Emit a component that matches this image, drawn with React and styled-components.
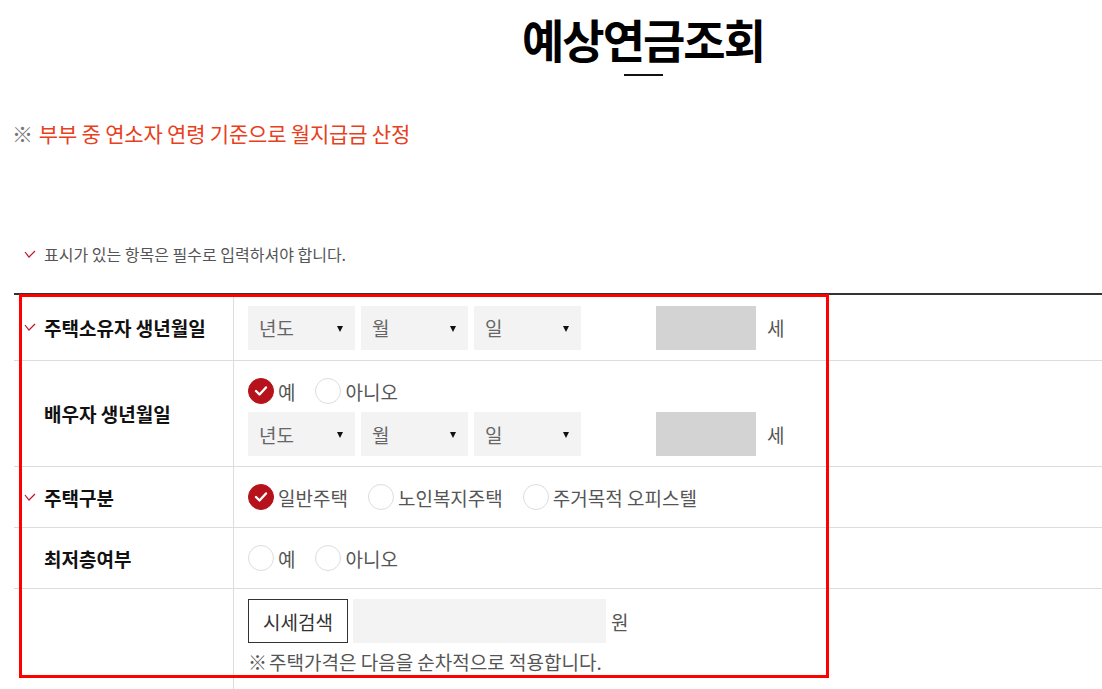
import styled, { createGlobalStyle } from 'styled-components';

const GlobalStyle = createGlobalStyle`
  body {
    margin: 0;
    overflow: hidden;
    background: #fff;
    font-family: "Noto Sans CJK KR", "Noto Sans", sans-serif;
    color: #555;
  }
`;

const Page = styled.div`
  padding-left: 14px;
`;

const Title = styled.h2`
  margin: 0;
  padding: 8px 0 0 170px;
  text-align: center;
  font-size: 46px;
  font-weight: 700;
  letter-spacing: -2px;
  line-height: 60px;
  color: #000;

  &::after {
    content: '';
    display: block;
    width: 39px;
    height: 2px;
    margin: 6px auto 0;
    background: #111;
  }
`;

const Notice = styled.p`
  margin: 42px 0 0 -2px;
  font-size: 21px;
  line-height: 30px;
  letter-spacing: -0.2px;
  color: #e8401c;

  span {
    color: #777;
    margin-right: 6px;
  }
`;

const RequiredNote = styled.p`
  display: flex;
  align-items: center;
  gap: 8px;
  margin: 95px 0 0 10px;
  font-size: 16px;
  line-height: 22px;
  color: #555;
`;

const Table = styled.div`
  position: relative;
  margin-top: 28px;
  border-top: 2px solid #333;
  display: grid;
  grid-template-columns: 220px 1fr;
`;

const Highlight = styled.div`
  position: absolute;
  left: 5px;
  top: -1px;
  width: 810px;
  height: 384px;
  box-sizing: border-box;
  border: 3px solid #ff0000;
  pointer-events: none;
`;

const Label = styled.div`
  display: flex;
  align-items: center;
  gap: 8px;
  padding-left: ${p => (p.$required ? 10 : 30)}px;
  height: ${p => p.$h}px;
  box-sizing: border-box;
  border-bottom: ${p => (p.$last ? 'none' : '1px solid #ddd')};
  border-right: 1px solid #ddd;
  font-size: 19px;
  font-weight: 700;
  color: #111;
`;

const Value = styled.div`
  display: flex;
  flex-direction: column;
  justify-content: ${p => (p.$top ? 'flex-start' : 'center')};
  gap: ${p => p.$gap || 0}px;
  padding: ${p => p.$pad || '0 14px'};
  height: ${p => p.$h}px;
  box-sizing: border-box;
  border-bottom: ${p => (p.$last ? 'none' : '1px solid #ddd')};
  font-size: 19px;
`;

const Line = styled.div`
  display: flex;
  align-items: center;
`;

const Select = styled.div`
  position: relative;
  width: 107px;
  height: 44px;
  margin-right: 6px;
  padding-left: 11px;
  box-sizing: border-box;
  background: #f3f3f3;
  display: flex;
  align-items: center;
  color: #666;

  &::after {
    content: '';
    position: absolute;
    right: 12px;
    top: 20px;
    border-left: 3.5px solid transparent;
    border-right: 3.5px solid transparent;
    border-top: 6px solid #111;
  }
`;

const AgeBox = styled.div`
  width: 100px;
  height: 44px;
  margin-left: 69px;
  background: #d3d3d3;
`;

const Unit = styled.span`
  margin-left: ${p => p.$gap || 11}px;
  color: #555;
`;

const Radios = styled.div`
  display: flex;
  align-items: center;
  gap: 20px;
  height: 26px;
`;

const Radio = styled.label`
  display: flex;
  align-items: center;
  gap: 4px;
  color: #555;
`;

const Circle = styled.span`
  width: 26px;
  height: 26px;
  box-sizing: border-box;
  border-radius: 50%;
  border: 1px solid ${p => (p.$on ? '#b5121b' : '#ddd')};
  background: ${p => (p.$on ? '#b5121b' : '#fff')};
  display: flex;
  align-items: center;
  justify-content: center;
`;

const SearchButton = styled.button`
  width: 100px;
  height: 44px;
  background: #fff;
  border: 1px solid #333;
  font-family: inherit;
  font-size: 19px;
  color: #333;
  padding: 0;
`;

const PriceInput = styled.div`
  width: 253px;
  height: 44px;
  margin-left: 5px;
  background: #f3f3f3;
`;

const Note = styled.p`
  margin: 0;
  font-size: 19px;
  line-height: 26px;
  color: #555;

  span {
    margin-right: 2px;
  }
`;

function RedCheck() {
  return (
    <svg width="12" height="9" viewBox="0 0 12 9">
      <polyline points="1,2 5,7 11,1" fill="none" stroke="#c8102e" strokeWidth="1.2" />
    </svg>
  );
}

function RadioItem({ on, children }) {
  return (
    <Radio>
      <Circle $on={on}>
        {on && (
          <svg width="14" height="12" viewBox="0 0 14 12">
            <polyline points="2,6 5.5,9.5 12,2.5" fill="none" stroke="#fff" strokeWidth="2.4" strokeLinecap="round" strokeLinejoin="round" />
          </svg>
        )}
      </Circle>
      {children}
    </Radio>
  );
}

function DateRow() {
  return (
    <Line>
      <Select>년도</Select>
      <Select>월</Select>
      <Select>일</Select>
      <AgeBox />
      <Unit>세</Unit>
    </Line>
  );
}

export default function App() {
  return (
    <Page>
      <GlobalStyle />
      <Title>예상연금조회</Title>
      <Notice>
        <span>※</span>부부 중 연소자 연령 기준으로 월지급금 산정
      </Notice>
      <RequiredNote>
        <RedCheck />
        표시가 있는 항목은 필수로 입력하셔야 합니다.
      </RequiredNote>
      <Table>
        <Label $required $h={66}>
          <RedCheck />
          주택소유자 생년월일
        </Label>
        <Value $h={66}>
          <DateRow />
        </Value>

        <Label $h={106}>배우자 생년월일</Label>
        <Value $h={106} $top $gap={8} $pad="17px 14px 10px">
          <Radios>
            <RadioItem on>예</RadioItem>
            <RadioItem>아니오</RadioItem>
          </Radios>
          <DateRow />
        </Value>

        <Label $required $h={61}>
          <RedCheck />
          주택구분
        </Label>
        <Value $h={61}>
          <Radios>
            <RadioItem on>일반주택</RadioItem>
            <RadioItem>노인복지주택</RadioItem>
            <RadioItem>주거목적 오피스텔</RadioItem>
          </Radios>
        </Value>

        <Label $h={61}>최저층여부</Label>
        <Value $h={61}>
          <Radios>
            <RadioItem>예</RadioItem>
            <RadioItem>아니오</RadioItem>
          </Radios>
        </Value>

        <Label $h={120} $last />
        <Value $h={120} $top $last $gap={6} $pad="10px 14px 0">
          <Line>
            <SearchButton>시세검색</SearchButton>
            <PriceInput />
            <Unit $gap={5}>원</Unit>
          </Line>
          <Note>
            <span>※</span>주택가격은 다음을 순차적으로 적용합니다.
          </Note>
        </Value>
        <Highlight />
      </Table>
    </Page>
  );
}
